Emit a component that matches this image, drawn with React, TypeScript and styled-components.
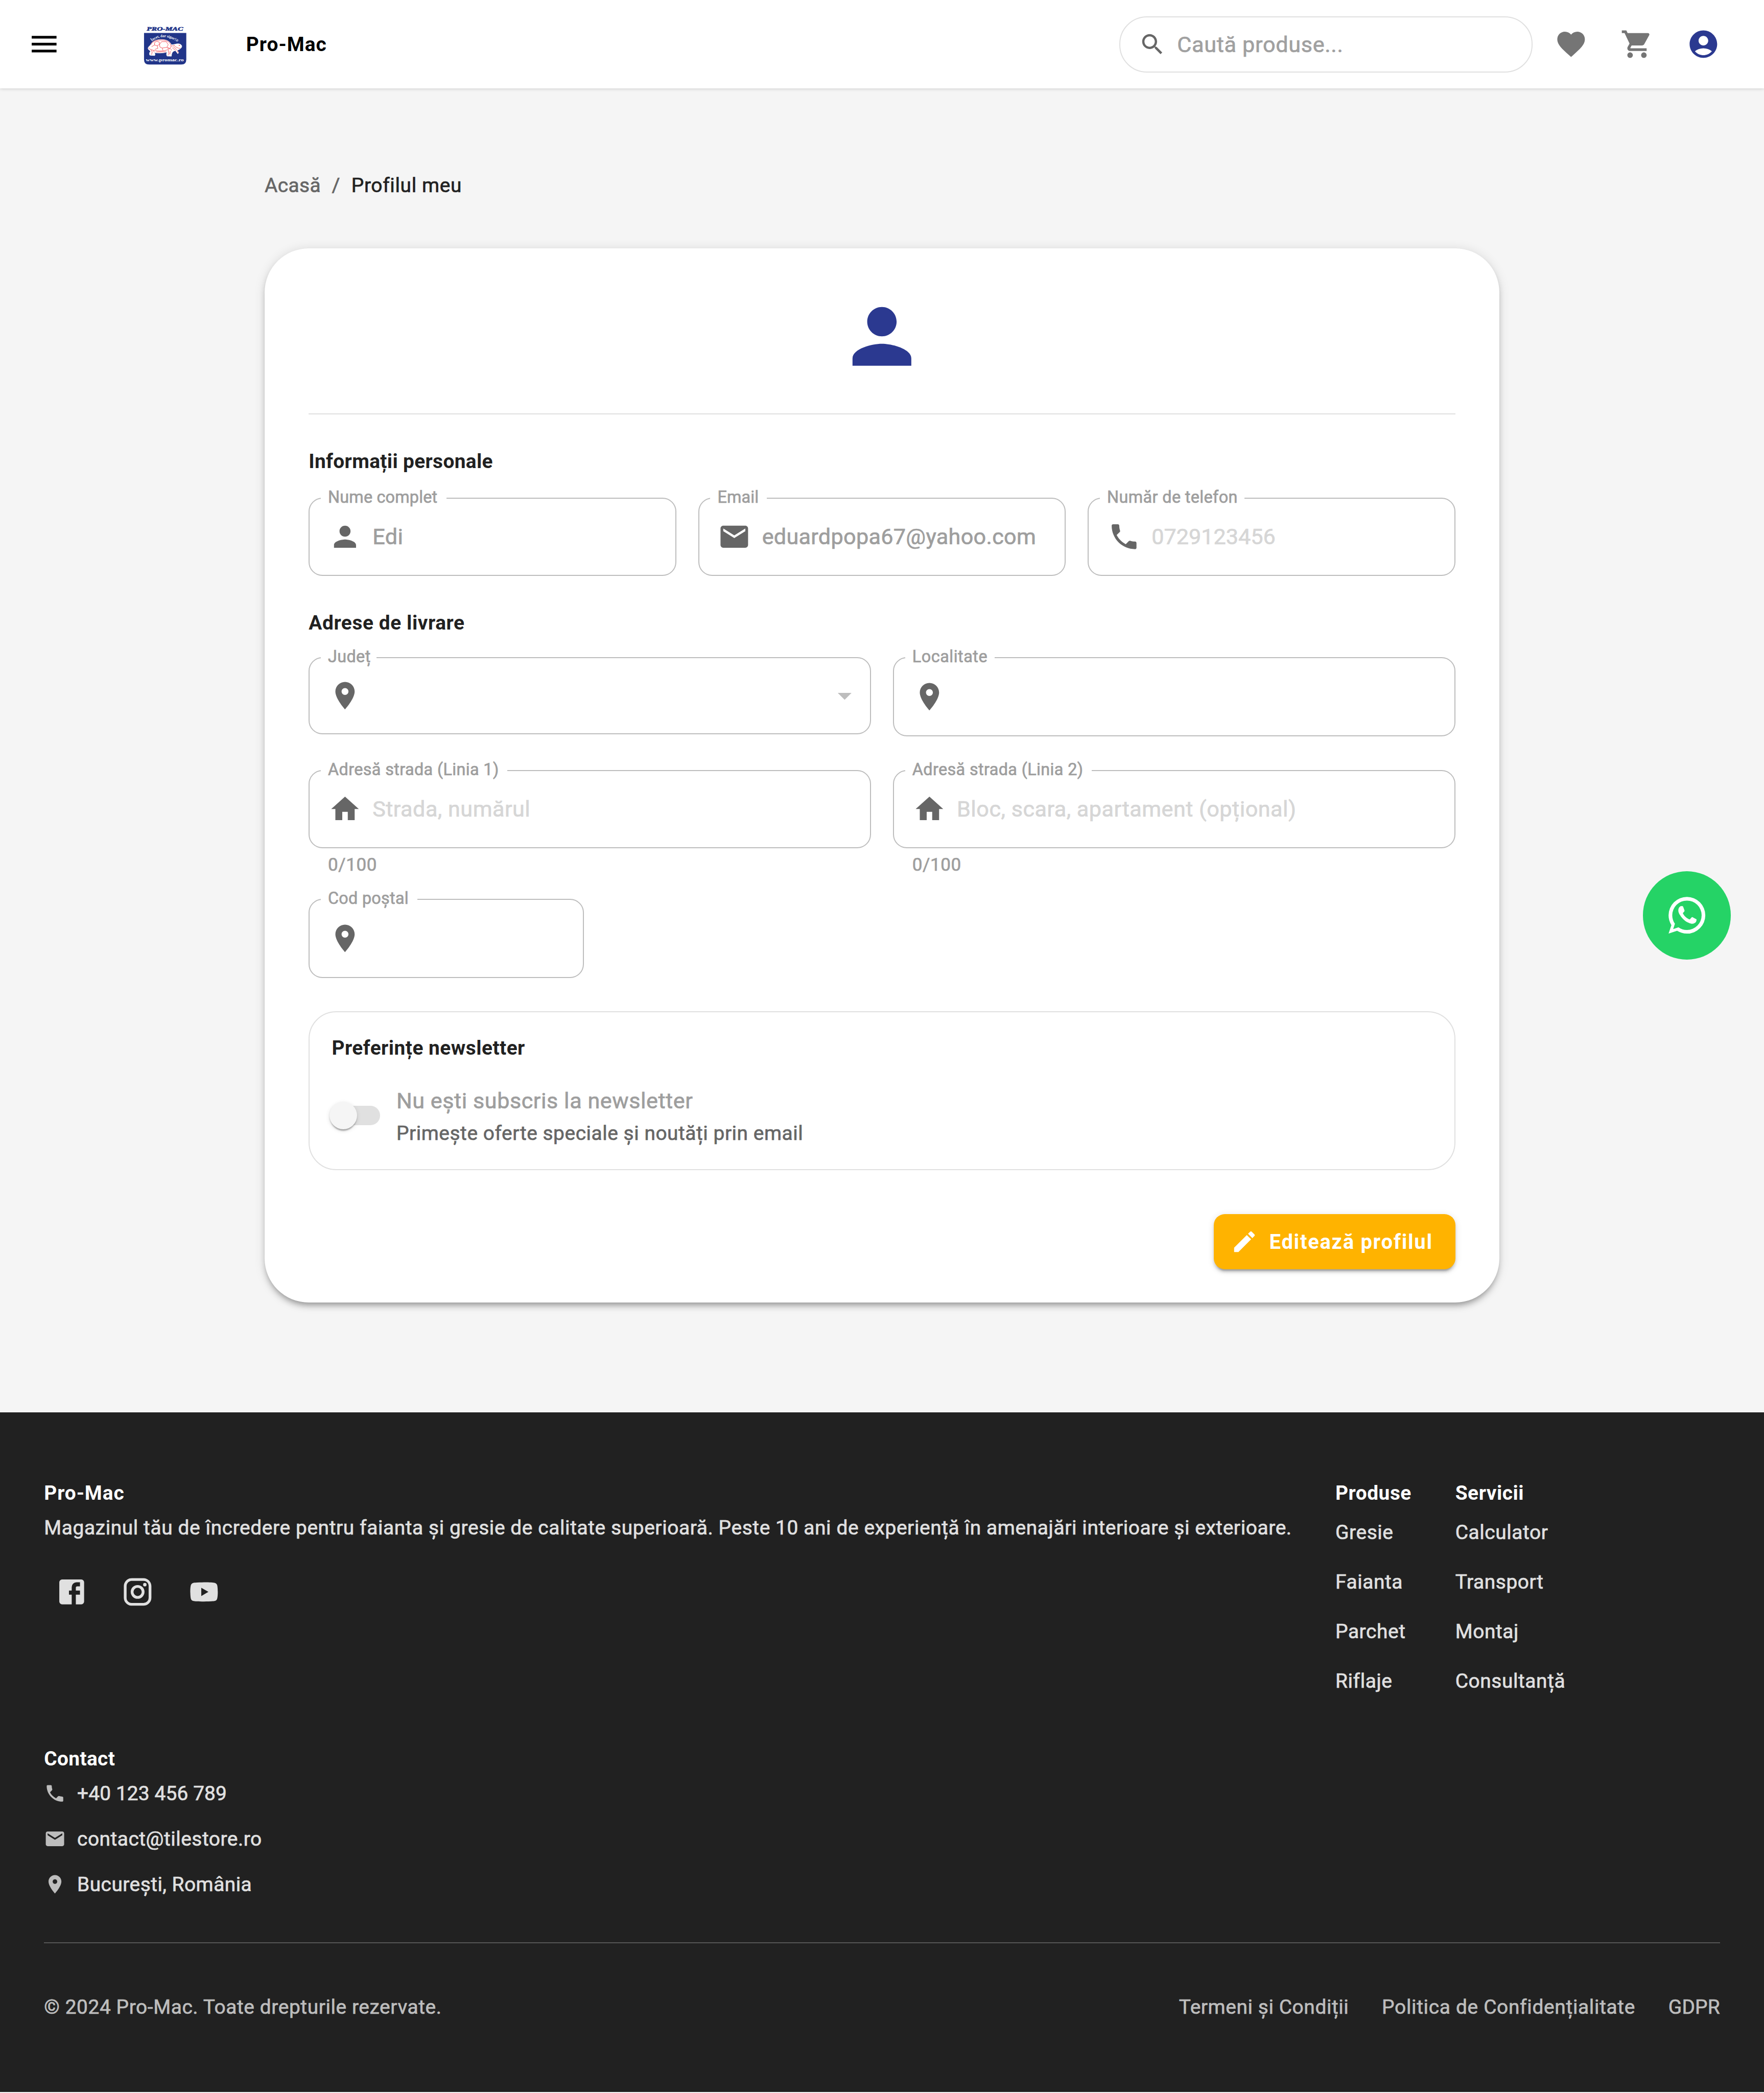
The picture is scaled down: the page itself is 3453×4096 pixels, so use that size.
import React from 'react';
import styled, { createGlobalStyle } from 'styled-components';

const GlobalStyle = createGlobalStyle`
  html { font-size: 26.9766px; }
  *, *::before, *::after { box-sizing: border-box; }
  body {
    margin: 0;
    background: #f5f5f5;
    font-family: Roboto, "Noto Sans", sans-serif;
    color: #212121;
  }
  h2, h3, p, ul { margin: 0; padding: 0; }
  ul { list-style: none; }
  button { font: inherit; border: 0; background: none; padding: 0; }
  a { color: inherit; text-decoration: none; }
`;

/* ---------- icons ---------- */

const paths = {
  menu: 'M3 18h18v-2H3v2zm0-5h18v-2H3v2zm0-7v2h18V6H3z',
  search:
    'M15.5 14h-.79l-.28-.27C15.41 12.59 16 11.11 16 9.5 16 5.91 13.09 3 9.5 3S3 5.91 3 9.5 5.91 16 9.5 16c1.61 0 3.09-.59 4.23-1.57l.27.28v.79l5 4.99L20.49 19l-4.99-5zm-6 0C7.01 14 5 11.99 5 9.5S7.01 5 9.5 5 14 7.01 14 9.5 11.99 14 9.5 14z',
  favorite:
    'm12 21.35-1.45-1.32C5.4 15.36 2 12.28 2 8.5 2 5.42 4.42 3 7.5 3c1.74 0 3.41.81 4.5 2.09C13.09 3.81 14.76 3 16.5 3 19.58 3 22 5.42 22 8.5c0 3.78-3.4 6.86-8.55 11.54L12 21.35z',
  cart:
    'M7 18c-1.1 0-1.99.9-1.99 2S5.9 22 7 22s2-.9 2-2-.9-2-2-2zM1 2v2h2l3.6 7.59-1.35 2.45c-.16.28-.25.61-.25.96 0 1.1.9 2 2 2h12v-2H7.42c-.14 0-.25-.11-.25-.25l.03-.12.9-1.63h7.45c.75 0 1.41-.41 1.75-1.03l3.58-6.49c.08-.14.12-.31.12-.48 0-.55-.45-1-1-1H5.21l-.94-2H1zm16 16c-1.1 0-1.99.9-1.99 2s.89 2 1.99 2 2-.9 2-2-.9-2-2-2z',
  account:
    'M12 2C6.48 2 2 6.48 2 12s4.48 10 10 10 10-4.48 10-10S17.52 2 12 2zm0 4c1.93 0 3.5 1.57 3.5 3.5S13.93 13 12 13s-3.5-1.57-3.5-3.5S10.07 6 12 6zm0 14c-2.03 0-4.43-.82-6.14-2.88C7.55 15.8 9.68 15 12 15s4.45.8 6.14 2.12C16.43 19.18 14.03 20 12 20z',
  person:
    'M12 12c2.21 0 4-1.79 4-4s-1.79-4-4-4-4 1.79-4 4 1.79 4 4 4zm0 2c-2.67 0-8 1.34-8 4v2h16v-2c0-2.66-5.33-4-8-4z',
  email:
    'M20 4H4c-1.1 0-1.99.9-1.99 2L2 18c0 1.1.9 2 2 2h16c1.1 0 2-.9 2-2V6c0-1.1-.9-2-2-2zm0 4-8 5-8-5V6l8 5 8-5v2z',
  phone:
    'M6.62 10.79c1.44 2.83 3.76 5.14 6.59 6.59l2.2-2.2c.27-.27.67-.36 1.02-.24 1.12.37 2.33.57 3.57.57.55 0 1 .45 1 1V20c0 .55-.45 1-1 1-9.39 0-17-7.61-17-17 0-.55.45-1 1-1h3.5c.55 0 1 .45 1 1 0 1.25.2 2.45.57 3.57.11.35.03.74-.25 1.02l-2.2 2.2z',
  place:
    'M12 2C8.13 2 5 5.13 5 9c0 5.25 7 13 7 13s7-7.75 7-13c0-3.87-3.13-7-7-7zm0 9.5c-1.38 0-2.5-1.12-2.5-2.5s1.12-2.5 2.5-2.5 2.5 1.12 2.5 2.5-1.12 2.5-2.5 2.5z',
  home: 'M10 20v-6h4v6h5v-8h3L12 3 2 12h3v8z',
  dropDown: 'm7 10 5 5 5-5z',
  edit:
    'M3 17.25V21h3.75L17.81 9.94l-3.75-3.75L3 17.25zM20.71 7.04c.39-.39.39-1.02 0-1.41l-2.34-2.34c-.39-.39-1.02-.39-1.41 0l-1.83 1.83 3.75 3.75 1.83-1.83z',
  facebook:
    'M5 3h14a2 2 0 0 1 2 2v14a2 2 0 0 1-2 2H5a2 2 0 0 1-2-2V5a2 2 0 0 1 2-2m13 2h-2.5A3.5 3.5 0 0 0 12 8.5V11h-2v3h2v7h3v-7h3v-3h-3V9a1 1 0 0 1 1-1h2V5z',
  instagram:
    'M7.8 2h8.4C19.4 2 22 4.6 22 7.8v8.4a5.8 5.8 0 0 1-5.8 5.8H7.8C4.6 22 2 19.4 2 16.2V7.8A5.8 5.8 0 0 1 7.8 2m-.2 2A3.6 3.6 0 0 0 4 7.6v8.8C4 18.39 5.61 20 7.6 20h8.8a3.6 3.6 0 0 0 3.6-3.6V7.6C20 5.61 18.39 4 16.4 4H7.6m9.65 1.5a1.25 1.25 0 0 1 1.25 1.25A1.25 1.25 0 0 1 17.25 8 1.25 1.25 0 0 1 16 6.75a1.25 1.25 0 0 1 1.25-1.25M12 7a5 5 0 0 1 5 5 5 5 0 0 1-5 5 5 5 0 0 1-5-5 5 5 0 0 1 5-5m0 2a3 3 0 0 0-3 3 3 3 0 0 0 3 3 3 3 0 0 0 3-3 3 3 0 0 0-3-3z',
  youtube:
    'M10 15l5.19-3L10 9v6m11.56-7.83c.13.47.22 1.1.28 1.9.07.8.1 1.49.1 2.09L22 12c0 2.19-.16 3.8-.44 4.83-.25.9-.83 1.48-1.73 1.73-.47.13-1.33.22-2.65.28-1.3.07-2.49.1-3.59.1L12 19c-4.19 0-6.8-.16-7.83-.44-.9-.25-1.48-.83-1.73-1.73-.13-.47-.22-1.1-.28-1.9-.07-.8-.1-1.49-.1-2.09L2 12c0-2.19.16-3.8.44-4.83.25-.9.83-1.48 1.73-1.73.47-.13 1.33-.22 2.65-.28 1.3-.07 2.49-.1 3.59-.1L12 5c4.19 0 6.8.16 7.83.44.9.25 1.48.83 1.73 1.73z',
  whatsapp:
    'M16.75 13.96c.25.13.41.2.46.3.06.11.04.61-.21 1.18-.2.56-1.24 1.1-1.7 1.12-.46.02-.47.36-2.96-.73-2.49-1.09-3.99-3.75-4.11-3.92-.12-.17-.96-1.38-.92-2.61.05-1.22.69-1.8.95-2.04.24-.26.51-.29.68-.26h.47c.15 0 .36-.06.55.45l.69 1.87c.06.13.1.28.01.44l-.27.41-.39.42c-.12.12-.26.25-.12.5.12.26.62 1.09 1.32 1.78.91.88 1.71 1.17 1.95 1.3.24.14.39.12.54-.04l.81-.94c.19-.25.35-.19.58-.11l1.67.88M12 2a10 10 0 0 1 10 10 10 10 0 0 1-10 10c-1.97 0-3.8-.57-5.35-1.55L2 22l1.55-4.65A9.969 9.969 0 0 1 2 12 10 10 0 0 1 12 2m0 2a8 8 0 0 0-8 8c0 1.72.54 3.31 1.46 4.61L4.5 19.5l2.89-.96A7.95 7.95 0 0 0 12 20a8 8 0 0 0 8-8 8 8 0 0 0-8-8z',
};
type IconName = keyof typeof paths;

const IconSvg = styled.svg<{ $size: number; $color: string }>`
  display: block;
  flex: none;
  width: ${(p) => p.$size / 10}rem;
  height: ${(p) => p.$size / 10}rem;
  fill: ${(p) => p.$color};
`;

function Icon({ name, size = 24, color = '#666666' }: { name: IconName; size?: number; color?: string }) {
  return (
    <IconSvg viewBox="0 0 24 24" $size={size} $color={color} aria-hidden="true">
      <path d={paths[name]} />
    </IconSvg>
  );
}

/* ---------- typography ---------- */

const sizes = {
  body: { font: 16, line: 24, track: 0.18 },
  button: { font: 14.8, line: 20, track: 0.65 },
  small: { font: 14.4, line: 20, track: 0.225 },
  helper: { font: 13, line: 18, track: 0.2 },
  label: { font: 12, line: 16, track: 0.14 },
};

interface TextProps {
  $size?: keyof typeof sizes;
  $color?: string;
  $bold?: boolean;
  $track?: number;
  $line?: number;
}

const Text = styled.span<TextProps>`
  display: block;
  padding-top: 0.08rem;
  white-space: nowrap;
  color: ${(p) => p.$color ?? '#212121'};
  font-weight: ${(p) => (p.$bold ? 700 : 400)};
  font-size: ${(p) => sizes[p.$size ?? 'small'].font / 10}rem;
  line-height: ${(p) => (p.$line ?? sizes[p.$size ?? 'small'].line) / 10 - 0.08}rem;
  letter-spacing: ${(p) => (p.$track ?? sizes[p.$size ?? 'small'].track) / 10}rem;
  -webkit-text-stroke: ${(p) => (p.$bold ? '0' : '0.7px')} currentColor;
`;

/* ---------- header ---------- */

const Header = styled.header`
  position: relative;
  display: flex;
  align-items: center;
  height: 6.4rem;
  padding: 0 2.4rem 0 1.2rem;
  background: #ffffff;
  box-shadow: 0 0.05rem 0.25rem rgba(0, 0, 0, 0.22);
`;

const IconButton = styled.button`
  display: flex;
  align-items: center;
  justify-content: center;
  flex: none;
  width: 4rem;
  height: 4rem;
`;

const Brand = styled.div`
  display: flex;
  align-items: center;
  gap: 4.3rem;
  margin-left: 5.16rem;
  flex: 1;
`;

const LogoSvg = styled.svg`
  display: block;
  width: 3.2rem;
  height: 3.2rem;
`;

const HeaderActions = styled.div`
  display: flex;
  align-items: center;
  gap: 0.8rem;
`;

const SearchBox = styled.div`
  display: flex;
  align-items: center;
  gap: 0.78rem;
  width: 30rem;
  height: 4.07rem;
  margin-top: 0.07rem;
  padding-left: 1.36rem;
  border: 2px solid #e0e0e0;
  border-radius: 2rem;
`;

function Logo() {
  return (
    <LogoSvg viewBox="78 42 264 264" role="img" aria-label="Pro-Mac">
      <defs>
        <path id="motto" d="M134 158 Q 206 104 286 162" />
      </defs>
      <path d="M87 108H340V267Q340 297 310 297H117Q87 297 87 267Z" fill="#213589" />
      <text
        x="103"
        y="94"
        fill="#213589"
        fontFamily="Liberation Serif, serif"
        fontWeight="700"
        fontStyle="italic"
        fontSize="33"
        textLength="218"
        lengthAdjust="spacingAndGlyphs"
        stroke="#213589"
        strokeWidth="2"
      >
        PRO-MAC
      </text>
      <text fill="#ffffff" fontFamily="Liberation Serif, serif" fontWeight="700" fontSize="23">
        <textPath href="#motto" textLength="166" lengthAdjust="spacingAndGlyphs">
          Încet, dar sigur!®
        </textPath>
      </text>
      <path
        d="M112 196C116 187 124 184 128 176C138 154 168 146 195 147C224 148 242 160 250 178C262 180 270 175 285 173C300 171 312 178 313 187C313 198 300 206 286 211L294 226L289 232L276 214C268 214 262 217 257 223C252 232 251 239 251 247L225 246C220 237 221 229 226 222C200 229 170 229 150 225C152 232 154 238 151 243L122 241C117 232 120 223 127 216C116 211 109 204 112 196Z"
        fill="#ffffff"
        stroke="#ffffff"
        strokeWidth="3"
      />
      <path
        d="M128 178C138 155 168 149 195 150C224 151 240 162 248 180C250 190 246 200 236 205C205 219 160 219 128 207C120 204 114 200 116 196M150 166L162 158L178 162L180 176L166 184L150 180ZM180 176L192 160L220 160L232 178L224 194L196 198L182 192ZM166 184L170 200L152 206M150 180L132 190M196 198L200 212M224 194L238 200M130 210L136 222L132 238M140 214L150 222M228 200C236 196 248 200 252 212M232 210L236 232M244 216L242 236M236 232L230 242M256 196L276 212M262 190L284 208M268 184C276 192 290 200 304 200M284 212L292 226M160 222L220 220M250 186C258 186 262 184 270 180"
        fill="none"
        stroke="#ee2b37"
        strokeWidth="2.4"
      />
      <circle cx="298" cy="182" r="3" fill="#ee2b37" />
      <text
        x="98"
        y="277"
        fill="#ffffff"
        fontFamily="Liberation Serif, serif"
        fontWeight="700"
        fontSize="27"
        textLength="227"
        lengthAdjust="spacingAndGlyphs"
      >
        www.promac.ro
      </text>
    </LogoSvg>
  );
}

/* ---------- profile card ---------- */

const Main = styled.main`
  width: 89.6rem;
  margin: 0 auto;
  padding: 6.03rem 0 8rem;
`;

const Breadcrumbs = styled.nav`
  display: flex;
  gap: 0.8rem;
`;

const Card = styled.section`
  margin-top: 3.57rem;
  padding: 3.2rem 3.2rem 2.4rem;
  background: #ffffff;
  border-radius: 3.2rem;
  box-shadow: 0 0.3rem 0.3rem -0.2rem rgba(0, 0, 0, 0.2), 0 0.3rem 0.4rem 0 rgba(0, 0, 0, 0.14),
    0 0.1rem 0.8rem 0 rgba(0, 0, 0, 0.12);
`;

const AvatarArea = styled.div`
  display: flex;
  justify-content: center;
  padding-bottom: 2.4rem;
  border-bottom: 2px solid #e0e0e0;
`;

const SectionTitle = styled(Text).attrs({ as: 'h2', $bold: true })<{ $top: number; $gap: number }>`
  margin-top: ${(p) => p.$top / 10}rem;
  margin-bottom: ${(p) => p.$gap / 10}rem;
`;

const FieldGrid = styled.div<{ $columns: number; $top?: number }>`
  display: grid;
  grid-template-columns: repeat(${(p) => p.$columns}, 1fr);
  gap: 1.6rem;
  align-items: start;
  margin-top: ${(p) => (p.$top ?? 0) / 10}rem;
`;

const FieldBox = styled.div<{ $height: number; $width?: number }>`
  position: relative;
  display: flex;
  align-items: center;
  gap: 0.8rem;
  height: ${(p) => p.$height / 10}rem;
  width: ${(p) => (p.$width ? `${p.$width / 10}rem` : 'auto')};
  padding: 0 0.7rem 0 1.43rem;
`;

const FieldOutline = styled.fieldset`
  position: absolute;
  inset: -0.5rem 0 0 0;
  margin: 0;
  padding: 0 0.8rem;
  border: 2px solid #bdbdbd;
  border-radius: 1rem;
  pointer-events: none;
`;

const FieldNotch = styled.legend<{ $width: number }>`
  width: ${(p) => p.$width / 10}rem;
  height: 1.08rem;
  padding: 0;
`;

const FieldLabel = styled(Text)`
  position: absolute;
  left: 1.4rem;
  top: -0.86rem;
`;

const FieldValue = styled(Text)`
  flex: 1;
`;

const HelperText = styled(Text)`
  margin: 0.27rem 0 0 1.4rem;
`;

interface FieldProps {
  label: string;
  notch: number;
  icon: IconName;
  height?: number;
  width?: number;
  value?: string;
  placeholder?: string;
  track?: number;
  labelTrack?: number;
  select?: boolean;
  helper?: string;
}

function Field({ label, notch, icon, height = 56.7, width, value, placeholder, track, labelTrack, select, helper }: FieldProps) {
  return (
    <div>
      <FieldBox $height={height} $width={width}>
        <Icon name={icon} />
        <FieldValue $size="body" $track={track} $color={value ? '#9e9e9e' : '#d6d6d6'}>
          {value ?? placeholder ?? ''}
        </FieldValue>
        {select && <Icon name="dropDown" color="#bdbdbd" />}
        <FieldOutline>
          <FieldNotch $width={notch} />
        </FieldOutline>
        <FieldLabel $size="label" $color="#9e9e9e" $track={labelTrack}>
          {label}
        </FieldLabel>
      </FieldBox>
      {helper && (
        <HelperText $size="helper" $color="#9e9e9e">
          {helper}
        </HelperText>
      )}
    </div>
  );
}

const PostalRow = styled.div`
  margin-top: 1.62rem;
`;

const Newsletter = styled.section`
  height: 11.53rem;
  margin-top: 2.4rem;
  padding: 1.56rem 1.6rem 0;
  border: 2px solid #e0e0e0;
  border-radius: 2rem;
`;

const NewsletterRow = styled.div`
  display: flex;
  align-items: center;
  gap: 1.17rem;
  margin-top: 1.68rem;
`;

const SwitchTrack = styled.div`
  display: flex;
  align-items: center;
  width: 3.4rem;
  height: 1.4rem;
  margin: -0.1rem 0 0 0.12rem;
  border-radius: 0.7rem;
  background: #e0e0e0;
`;

const SwitchThumb = styled.div`
  flex: none;
  width: 2rem;
  height: 2rem;
  margin-left: -0.27rem;
  border-radius: 50%;
  background: #f5f5f5;
  box-shadow: 0 0.2rem 0.1rem -0.1rem rgba(0, 0, 0, 0.2), 0 0.1rem 0.1rem 0 rgba(0, 0, 0, 0.14),
    0 0.1rem 0.3rem 0 rgba(0, 0, 0, 0.12);
`;

const CardFooter = styled.div`
  display: flex;
  justify-content: flex-end;
  margin-top: 3.2rem;
`;

const EditButton = styled.button`
  display: flex;
  align-items: center;
  gap: 0.8rem;
  width: 17.52rem;
  height: 4rem;
  padding-left: 1.22rem;
  border-radius: 0.8rem;
  background: #ffb300;
  box-shadow: 0 0.3rem 0.1rem -0.2rem rgba(0, 0, 0, 0.2), 0 0.2rem 0.2rem 0 rgba(0, 0, 0, 0.14),
    0 0.1rem 0.5rem 0 rgba(0, 0, 0, 0.12);
`;

const WhatsAppButton = styled.a`
  position: fixed;
  right: 2.4rem;
  top: 63.2rem;
  display: flex;
  align-items: center;
  justify-content: center;
  width: 6.4rem;
  height: 6.4rem;
  border-radius: 50%;
  background: #25d366;
`;

/* ---------- footer ---------- */

const Footer = styled.footer`
  padding: 4.8rem 3.2rem 0;
  height: 49.27rem;
  background: #212121;
`;

const FooterTop = styled.div`
  display: grid;
  grid-template-columns: 90.5rem 5.5rem 1fr;
  column-gap: 3.2rem;
`;

const Blurb = styled(Text)`
  margin-top: 0.42rem;
`;

const Socials = styled.div`
  display: flex;
  gap: 0.8rem;
  margin-top: 1.57rem;
`;

const LinkList = styled.ul`
  margin-top: 0.06rem;
`;

const Contact = styled.section`
  margin-top: 2.8rem;
`;

const ContactList = styled.ul`
  display: grid;
  gap: 1.3rem;
  margin-top: 0.55rem;
`;

const ContactItem = styled.li`
  display: flex;
  align-items: center;
  gap: 0.8rem;
`;

const FooterBottom = styled.div`
  display: flex;
  justify-content: space-between;
  margin-top: 3.22rem;
  padding-top: 3.6rem;
  border-top: 2px solid #555555;
`;

const LegalLinks = styled.nav`
  display: flex;
  gap: 2.4rem;
`;

const linkColumns = [
  { title: 'Produse', links: ['Gresie', 'Faianta', 'Parchet', 'Riflaje'] },
  { title: 'Servicii', links: ['Calculator', 'Transport', 'Montaj', 'Consultanță'] },
];

const contacts: { icon: IconName; text: string; track: number }[] = [
  { icon: 'phone', text: '+40 123 456 789', track: 0.05 },
  { icon: 'email', text: 'contact@tilestore.ro', track: 0.2 },
  { icon: 'place', text: 'București, România', track: 0.18 },
];

export default function App() {
  return (
    <>
      <GlobalStyle />
      <Header>
        <IconButton aria-label="Meniu">
          <Icon name="menu" color="#000000" />
        </IconButton>
        <Brand>
          <Logo />
          <Text $bold $color="#000000" $track={0.38}>
            Pro-Mac
          </Text>
        </Brand>
        <HeaderActions>
          <SearchBox>
            <Icon name="search" size={20} />
            <Text $size="body" $color="#a0a0a0" $track={0.26}>
              Caută produse...
            </Text>
          </SearchBox>
          <IconButton>
            <Icon name="favorite" color="#757575" />
          </IconButton>
          <IconButton>
            <Icon name="cart" color="#757575" />
          </IconButton>
          <IconButton>
            <Icon name="account" color="#2b3990" />
          </IconButton>
        </HeaderActions>
      </Header>

      <Main>
        <Breadcrumbs>
          <Text $color="#666666" $track={0.15}>
            Acasă
          </Text>
          <Text $color="#666666">/</Text>
          <Text $track={0.25}>Profilul meu</Text>
        </Breadcrumbs>

        <Card>
          <AvatarArea>
            <Icon name="person" size={64} color="#2b3990" />
          </AvatarArea>

          <SectionTitle $top={23.6} $gap={16.6} $track={0.13}>
            Informații personale
          </SectionTitle>
          <FieldGrid $columns={3}>
            <Field label="Nume complet" notch={91.3} icon="person" value="Edi" labelTrack={0.07} />
            <Field label="Email" notch={41} icon="email" value="eduardpopa67@yahoo.com" track={0.11} labelTrack={0.05} />
            <Field label="Număr de telefon" notch={105} icon="phone" placeholder="0729123456" track={0} />
          </FieldGrid>

          <SectionTitle $top={23.7} $gap={15.4} $track={0.22}>
            Adrese de livrare
          </SectionTitle>
          <FieldGrid $columns={2}>
            <Field label="Județ" notch={40.3} icon="place" height={56} select />
            <Field label="Localitate" notch={65} icon="place" height={57.6} labelTrack={0.19} />
          </FieldGrid>
          <FieldGrid $columns={2} $top={24.2}>
            <Field
              label="Adresă strada (Linia 1)"
              notch={135.5}
              icon="home"
              placeholder="Strada, numărul"
              helper="0/100"
            />
            <Field
              label="Adresă strada (Linia 2)"
              notch={135.5}
              icon="home"
              placeholder="Bloc, scara, apartament (opțional)"
              helper="0/100"
            />
          </FieldGrid>
          <PostalRow>
            <Field label="Cod poștal" notch={70} icon="place" height={57.4} width={199.7} labelTrack={0.1} />
          </PostalRow>

          <Newsletter>
            <Text as="h3" $bold $track={0.18}>
              Preferințe newsletter
            </Text>
            <NewsletterRow>
              <SwitchTrack>
                <SwitchThumb />
              </SwitchTrack>
              <div>
                <Text $size="body" $color="#9e9e9e" $track={0.2}>
                  Nu ești subscris la newsletter
                </Text>
                <Text $color="#666666" $line={22.3} $track={0.21}>
                  Primește oferte speciale și noutăți prin email
                </Text>
              </div>
            </NewsletterRow>
          </Newsletter>

          <CardFooter>
            <EditButton>
              <Icon name="edit" size={20} color="#ffffff" />
              <Text $size="button" $bold $color="#ffffff">
                Editează profilul
              </Text>
            </EditButton>
          </CardFooter>
        </Card>
      </Main>

      <Footer>
        <FooterTop>
          <div>
            <Text as="h3" $bold $color="#ffffff" $track={0.34}>
              Pro-Mac
            </Text>
            <Blurb as="p" $color="#e0e0e0" $line={22} $track={0.231}>
              Magazinul tău de încredere pentru faianta și gresie de calitate superioară. Peste 10 ani de experiență în
              amenajări interioare și exterioare.
            </Blurb>
            <Socials>
              <IconButton aria-label="Facebook">
                <Icon name="facebook" color="#e0e0e0" />
              </IconButton>
              <IconButton aria-label="Instagram">
                <Icon name="instagram" color="#e0e0e0" />
              </IconButton>
              <IconButton aria-label="YouTube">
                <Icon name="youtube" color="#e0e0e0" />
              </IconButton>
            </Socials>
          </div>
          {linkColumns.map((column) => (
            <div key={column.title}>
              <Text as="h3" $bold $color="#ffffff" $track={0.2}>
                {column.title}
              </Text>
              <LinkList>
                {column.links.map((link) => (
                  <li key={link}>
                    <Text as="a" $color="#e0e0e0" $line={36}>
                      {link}
                    </Text>
                  </li>
                ))}
              </LinkList>
            </div>
          ))}
        </FooterTop>

        <Contact>
          <Text as="h3" $bold $color="#ffffff" $track={0.13}>
            Contact
          </Text>
          <ContactList>
            {contacts.map((item) => (
              <ContactItem key={item.text}>
                <Icon name={item.icon} size={16} color="#bdbdbd" />
                <Text $color="#e0e0e0" $track={item.track}>
                  {item.text}
                </Text>
              </ContactItem>
            ))}
          </ContactList>
        </Contact>

        <FooterBottom>
          <Text $color="#bdbdbd">© 2024 Pro-Mac. Toate drepturile rezervate.</Text>
          <LegalLinks>
            <Text as="a" $color="#bdbdbd">
              Termeni și Condiții
            </Text>
            <Text as="a" $color="#bdbdbd" $track={0.26}>
              Politica de Confidențialitate
            </Text>
            <Text as="a" $color="#bdbdbd" $track={0.05}>
              GDPR
            </Text>
          </LegalLinks>
        </FooterBottom>
      </Footer>

      <WhatsAppButton aria-label="WhatsApp">
        <Icon name="whatsapp" size={32} color="#ffffff" />
      </WhatsAppButton>
    </>
  );
}
